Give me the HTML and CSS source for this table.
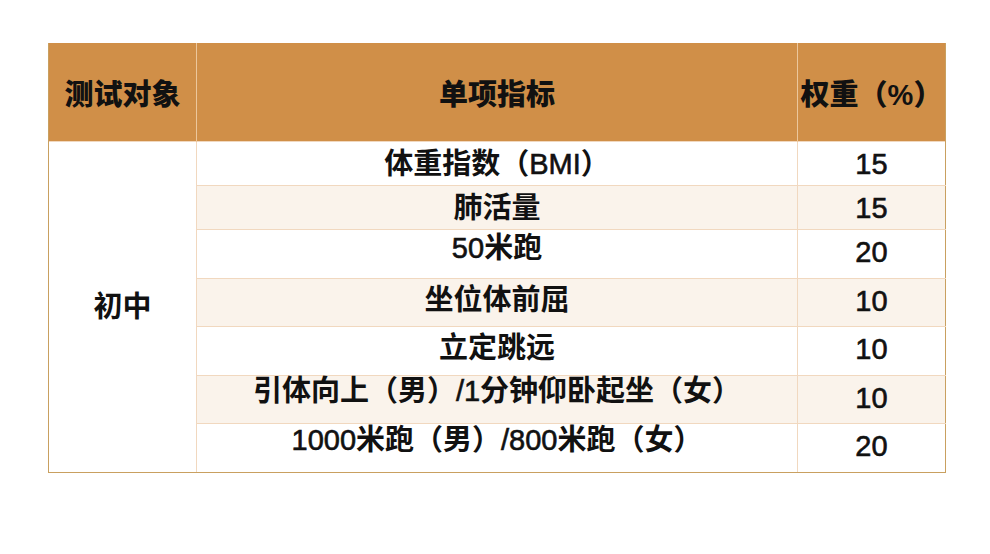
FILE: index.html
```html
<!DOCTYPE html>
<html lang="zh-CN">
<head>
<meta charset="utf-8">
<title>体测指标</title>
<link rel="stylesheet" href="styles.css">
</head>
<body>
<table class="score-table">
  <colgroup>
    <col class="col-target">
    <col class="col-item">
    <col class="col-weight">
  </colgroup>
  <thead>
    <tr class="head-row">
      <th>测试对象</th>
      <th>单项指标</th>
      <th>权重（%）</th>
    </tr>
  </thead>
  <tbody>
    <tr class="row r44">
      <td class="target" rowspan="7">初中</td>
      <td class="item">体重指数（<span class="num">BMI</span>）</td>
      <td class="weight num">15</td>
    </tr>
    <tr class="row r44 alt">
      <td class="item">肺活量</td>
      <td class="weight num">15</td>
    </tr>
    <tr class="row r49">
      <td class="item up4"><span class="num">50</span>米跑</td>
      <td class="weight num">20</td>
    </tr>
    <tr class="row r48 alt">
      <td class="item up1">坐位体前屈</td>
      <td class="weight num">10</td>
    </tr>
    <tr class="row r49">
      <td class="item up1">立定跳远</td>
      <td class="weight num">10</td>
    </tr>
    <tr class="row r48 alt">
      <td class="item up7">引体向上（男）<span class="num">/1</span>分钟仰卧起坐（女）</td>
      <td class="weight num">10</td>
    </tr>
    <tr class="row r49">
      <td class="item up6"><span class="num">1000</span>米跑（男）<span class="num">/800</span>米跑（女）</td>
      <td class="weight num">20</td>
    </tr>
  </tbody>
</table>
</body>
</html>
```

FILE: styles.css
```css
html, body {
  margin: 0;
  padding: 0;
  background: #ffffff;
}

body {
  padding: 43px 0 0 48px;
  font-family: "Liberation Sans", "Noto Sans CJK SC", sans-serif;
  color: #111111;
}

.score-table {
  border-collapse: collapse;
  table-layout: fixed;
  width: 897px;
  border: 1px solid #c9a060;
  border-top: 0;
}

.col-target { width: 148px; }
.col-item { width: 601px; }
.col-weight { width: 148px; }

.head-row th {
  height: 98px;
  padding: 0;
  background: #d08f48;
  color: #111111;
  font-size: 29px;
  font-weight: 900;
  text-align: center;
  vertical-align: middle;
  border-left: 1px solid #ecc79c;
  white-space: nowrap;
}

.head-row th:first-child {
  border-left: 1px solid #c9a060;
}

.row td {
  padding: 7px 0 0 0;
  font-size: 29px;
  line-height: 30px;
  font-weight: 700;
  text-align: center;
  vertical-align: top;
  border: 1px solid #f1d8bf;
  white-space: nowrap;
  box-sizing: border-box;
}

.num,
.row td.num {
  font-weight: 400;
  -webkit-text-stroke: 0.6px #111111;
}

.row td.target {
  vertical-align: middle;
  padding: 0;
  background: #ffffff;
  border-left: 1px solid #c9a060;
  border-bottom: 1px solid #c9a060;
}

.row td.weight {
  border-right: 1px solid #c9a060;
}

.row.alt td.item,
.row.alt td.weight {
  background: #faf3eb;
}

.r44 { height: 44px; }
.r48 { height: 48px; }
.r49 { height: 49px; }

.row td.up1 { padding-top: 6px; }
.row td.up4 { padding-top: 3px; }
.row td.up6 { padding-top: 1px; }
.row td.up7 { padding-top: 0; }

tbody tr:last-child td {
  border-bottom: 1px solid #c9a060;
}
```
